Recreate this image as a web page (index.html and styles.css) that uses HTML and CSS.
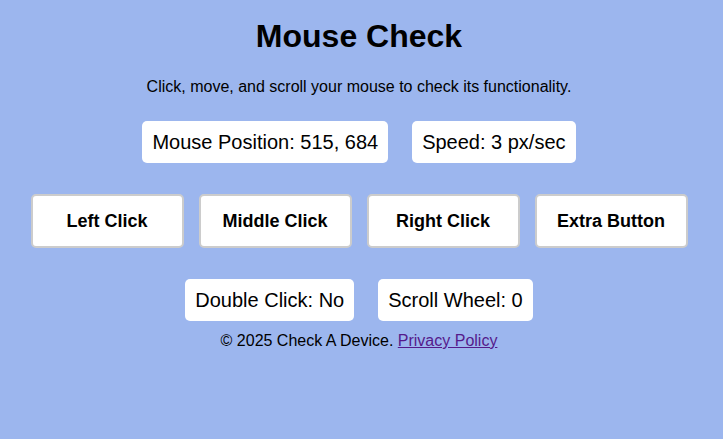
FILE: index.html
```html
<!DOCTYPE html>
<html lang="en">
<head>
<meta charset="utf-8">
<title>Mouse Check</title>
<link rel="stylesheet" href="styles.css">
</head>
<body>
<main class="page">
  <h1 class="title">Mouse Check</h1>
  <p class="intro">Click, move, and scroll your mouse to check its functionality.</p>
  <div class="row row-info">
    <div class="info">Mouse Position: 515, 684</div>
    <div class="info">Speed: 3 px/sec</div>
  </div>
  <div class="row row-buttons">
    <div class="btn">Left Click</div>
    <div class="btn">Middle Click</div>
    <div class="btn">Right Click</div>
    <div class="btn">Extra Button</div>
  </div>
  <div class="row row-extra">
    <div class="info">Double Click: No</div>
    <div class="info">Scroll Wheel: 0</div>
  </div>
  <footer class="footer">© 2025 Check A Device. <a class="link" href="#">Privacy Policy</a></footer>
</main>
</body>
</html>
```

FILE: styles.css
```css
html, body {
  margin: 0;
  padding: 0;
}
body {
  background: #9cb6ee;
  font-family: "Liberation Sans", Arial, sans-serif;
  color: #000;
}
.page {
  display: flex;
  flex-direction: column;
  align-items: center;
  padding-top: 18px;
  padding-right: 5px;
}
.title {
  margin: 0;
  font-size: 32px;
  line-height: 37px;
  font-weight: bold;
}
.intro {
  margin: 23px 0 0;
  font-size: 16px;
  line-height: 18px;
}
.row {
  display: flex;
  justify-content: center;
}
.row-info {
  margin-top: 25px;
  gap: 24px;
}
.row-extra {
  margin-top: 31px;
  gap: 24px;
}
.info {
  background: #fff;
  border-radius: 5px;
  padding: 10px;
  font-size: 20px;
  line-height: 22px;
}
.row-buttons {
  margin-top: 31px;
  gap: 15px;
}
.btn {
  box-sizing: border-box;
  width: 153px;
  height: 54px;
  background: #fff;
  border: 2px solid #cccccc;
  border-radius: 5px;
  display: flex;
  align-items: center;
  justify-content: center;
  font-size: 18px;
  font-weight: bold;
}
.footer {
  margin-top: 11px;
  font-size: 16px;
  line-height: 18px;
}
.link {
  color: #551a8b;
}
```
